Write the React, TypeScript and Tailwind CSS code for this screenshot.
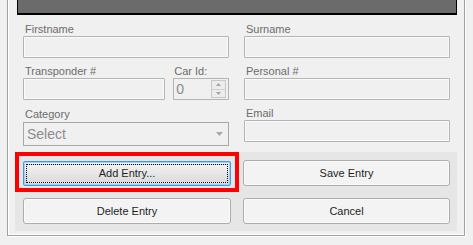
import React from "react";

function Field({ label, className = "" }: { label: string; className?: string }) {
  return (
    <div className={"flex flex-col " + className}>
      <span className="pl-[2px] h-[14px] leading-[14px] text-[#6d6d6d]">{label}</span>
      <div className="h-[22px] border border-[#b4b4b4] rounded-[1px] bg-[#f0f0f0] shadow-[inset_0_0_0_1px_#fafafa]" />
    </div>
  );
}

function WinButton({ label }: { label: string }) {
  return (
    <button className="h-[26px] w-full border border-[#adadad] rounded-[3px] bg-[#f3f3f3] text-[#1e1e1e] shadow-[inset_0_0_0_1px_#fbfbfb]">
      {label}
    </button>
  );
}

export default function App() {
  return (
    <div className="relative w-[473px] h-[245px] bg-[#f0f0f0] pl-[7px] pr-[8px] pb-[9px] text-[11px] font-['Liberation_Sans',Arial,sans-serif] overflow-hidden">
      <div className="h-full border-x border-b border-[#a0a0a0] shadow-[1px_1px_0_#ffffff,inset_1px_-1px_0_#ffffff] flex flex-col">
        {/* dark title bar */}
        <div className="ml-[9px] mr-[7px] h-[15px] bg-[#6b6b6b] border-x border-b-2 border-black" />

        <div className="grid grid-cols-[206px_207px] gap-x-[14px] pl-[15px] pt-[7px]">
          <Field label="Firstname" />
          <Field label="Surname" className="pl-[1px]" />
        </div>

        <div className="grid grid-cols-[206px_207px] gap-x-[14px] pl-[15px] pt-[6px]">
          <div className="flex gap-[8px]">
            <Field label="Transponder #" className="w-[143px]" />
            <div className="flex flex-col w-[56px]">
              <span className="pl-[1px] h-[14px] leading-[14px] text-[#6d6d6d]">Car Id:</span>
              <div className="h-[22px] border border-[#b4b4b4] bg-[#f0f0f0] flex items-center">
                <span className="flex-1 pl-[2px] text-[14px] text-[#8a8a8a]">0</span>
                <div className="w-[15px] h-[18px] mr-[2px] border border-[#c8c8c8] bg-[#ececec] flex flex-col">
                  <div className="flex-1 flex items-center justify-center border-b border-[#d0d0d0]">
                    <svg width="5" height="3" viewBox="0 0 5 3"><path d="M0 3L2.5 0L5 3Z" fill="#a5a5a5" /></svg>
                  </div>
                  <div className="flex-1 flex items-center justify-center">
                    <svg width="5" height="3" viewBox="0 0 5 3"><path d="M0 0L2.5 3L5 0Z" fill="#a5a5a5" /></svg>
                  </div>
                </div>
              </div>
            </div>
          </div>
          <Field label="Personal #" className="pl-[1px]" />
        </div>

        <div className="grid grid-cols-[206px_207px] gap-x-[14px] pl-[15px] pt-[7px]">
          <div className="flex flex-col">
            <span className="pl-[2px] h-[15px] leading-[15px] text-[#6d6d6d]">Category</span>
            <div className="h-[24px] border border-[#a8a8a8] bg-[#f0f0f0] flex items-center">
              <span className="flex-1 pl-[3px] text-[14px] text-[#8c8c8c]">Select</span>
              <svg className="mr-[5px]" width="7" height="4" viewBox="0 0 7 4"><path d="M0 0L3.5 4L7 0Z" fill="#a8a8a8" /></svg>
            </div>
          </div>
          <Field label="Email" className="pl-[1px] -mt-[1px]" />
        </div>

        {/* button panel */}
        <div className="mx-[7px] mt-[6px] bg-[#e6e6e6] pt-[8px] pb-[7px] pl-[8px] pr-[7px] grid grid-cols-[208px_207px] gap-x-[12px] gap-y-[12px]">
          <button className="h-[25px] w-full mt-[1px] border border-[#3c9ae8] rounded-[2px] bg-gradient-to-b from-[#f2f2f2] from-45% to-[#dadada] to-55% p-[2px] text-[#1e1e1e] shadow-[inset_0_0_0_1px_#9fd0f5]">
            <div className="h-full border border-dotted border-black flex items-center justify-center bg-gradient-to-b from-[#f1f1f1] to-[#dcdcdc]">
              Add Entry...
            </div>
          </button>
          <WinButton label="Save Entry" />
          <WinButton label="Delete Entry" />
          <WinButton label="Cancel" />
        </div>
      </div>

      {/* red annotation */}
      <div className="absolute left-[15px] top-[152px] w-[224px] h-[40px] border-4 border-[#ff0000]" />
    </div>
  );
}
